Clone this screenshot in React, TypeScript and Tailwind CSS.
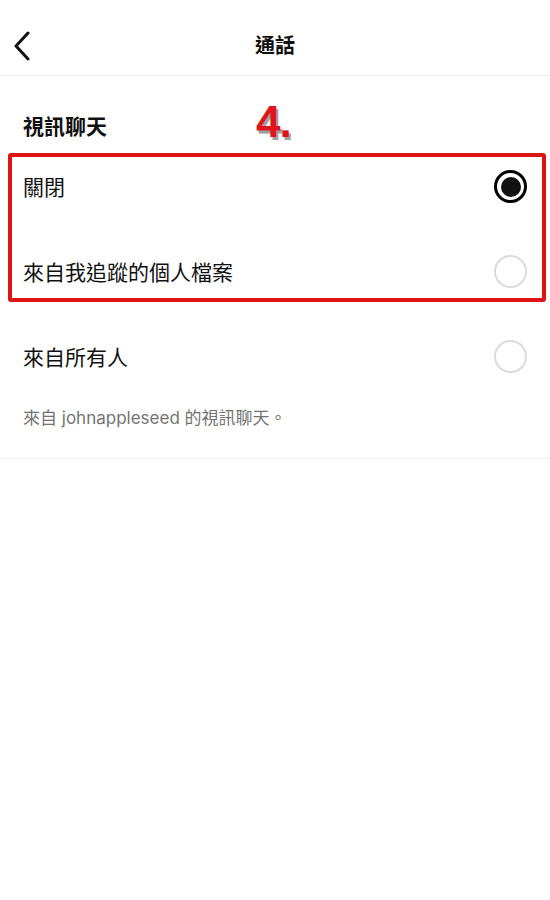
import { useState } from "react";

const options = ["關閉", "來自我追蹤的個人檔案", "來自所有人"];

function Radio({ checked }: { checked: boolean }) {
  return checked ? (
    <span className="w-[33px] h-[33px] rounded-full border-[3px] border-black flex items-center justify-center">
      <span className="w-[20px] h-[20px] rounded-full bg-[#111]" />
    </span>
  ) : (
    <span className="w-[33px] h-[33px] rounded-full border-2 border-[#dbdbdb]" />
  );
}

function OptionRow({ label, checked, onClick }: { label: string; checked: boolean; onClick: () => void }) {
  return (
    <div onClick={onClick} className="h-[85px] flex items-center justify-between pl-[23px] pr-[23px] cursor-pointer">
      <span className="text-[21px] text-[#111]">{label}</span>
      <Radio checked={checked} />
    </div>
  );
}

export default function App() {
  const [selected, setSelected] = useState(0);

  return (
    <div
      className="w-[550px] min-h-[900px] bg-white"
      style={{ fontFamily: '"Noto Sans CJK TC", "Noto Sans", sans-serif' }}
    >
      <header className="relative h-[76px] flex items-center justify-center border-b border-[#f0f0f0]">
        <button className="absolute left-[11px] top-[31px]">
          <svg width="22" height="30" viewBox="0 0 22 30" fill="none">
            <path d="M17 2 L5 15 L17 28" stroke="#111" strokeWidth="3" strokeLinecap="round" strokeLinejoin="round" />
          </svg>
        </button>
        <h1 className="text-[20px] font-bold text-[#111] mt-[14px]">通話</h1>
      </header>

      <div className="relative pt-[35px] pb-[5px] px-[23px]">
        <h2 className="text-[21px] leading-[28px] font-bold text-[#111]">視訊聊天</h2>
        <span className="absolute left-[256px] top-[24px] text-[44px] leading-none font-black text-[#e0141c] [text-shadow:2px_3px_0_#a0a0a0] tracking-[-1px] font-['Liberation_Sans',sans-serif]">
          4.
        </span>
      </div>

      <div className="relative">
        {options.slice(0, 2).map((o, i) => (
          <OptionRow key={o} label={o} checked={selected === i} onClick={() => setSelected(i)} />
        ))}
        <div className="absolute left-[8px] right-[4px] top-[9px] bottom-[12px] border-4 border-[#dc1414] rounded-[3px] pointer-events-none" />
      </div>
      <OptionRow label={options[2]} checked={selected === 2} onClick={() => setSelected(2)} />

      <div className="px-[23px] pt-[7px] pb-[28px] border-b border-[#f0f0f0]">
        <p className="text-[17px] leading-[24px] text-[#737373] font-['Inter','Noto_Sans_CJK_TC',sans-serif]">
          來自 johnappleseed 的視訊聊天。
        </p>
      </div>
    </div>
  );
}
